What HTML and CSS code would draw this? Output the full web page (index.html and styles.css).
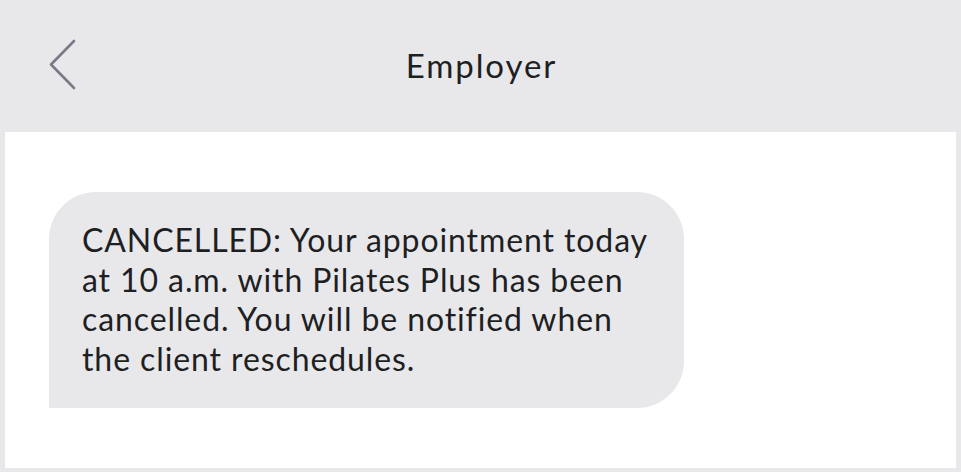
FILE: index.html
```html
<!DOCTYPE html>
<html lang="en">
<head>
<meta charset="utf-8">
<title>Employer</title>
<link rel="stylesheet" href="styles.css">
</head>
<body>
<div class="screen">
  <header class="topbar">
    <button class="back" aria-label="Back">
      <svg width="30" height="52" viewBox="0 0 30 52" aria-hidden="true">
        <path d="M25 3 L2 26.5 L25 50" fill="none" stroke="#7b7986" stroke-width="2.6" stroke-linecap="round" stroke-linejoin="round"/>
      </svg>
    </button>
    <h1 class="title">Employer</h1>
  </header>
  <main class="thread">
    <div class="bubble">CANCELLED: Your appointment today at 10 a.m. with Pilates Plus has been cancelled. You will be notified when the client reschedules.</div>
  </main>
</div>
</body>
</html>
```

FILE: styles.css
```css
html, body {
  margin: 0;
  padding: 0;
  height: 100%;
}
body {
  background: #e8e8ea;
  font-family: Lato, "Noto Sans", sans-serif;
  color: #1e1f23;
}
.screen {
  display: flex;
  flex-direction: column;
  height: 472px;
}
.topbar {
  position: relative;
  height: 132px;
  display: flex;
  align-items: center;
  justify-content: center;
  flex: none;
}
.back {
  position: absolute;
  left: 49px;
  top: 38px;
  padding: 0;
  margin: 0;
  border: 0;
  background: none;
  display: block;
  line-height: 0;
}
.title {
  margin: 0;
  font-weight: 400;
  font-size: 33px;
  line-height: 40px;
  letter-spacing: 1.9px;
  margin-top: -2px;
  margin-right: -1.9px;
  color: #1e1f23;
}
.thread {
  flex: 1;
  background: #ffffff;
  margin: 0 5px 4px 5px;
  padding: 60px 0 0 44px;
}
.bubble {
  width: 635px;
  box-sizing: border-box;
  background: #e8e8ea;
  border-radius: 47px 47px 47px 0;
  padding: 28px 20px 30px 33px;
  font-size: 32px;
  line-height: 39.5px;
  letter-spacing: 0.9px;
  color: #1e1f23;
}
```
